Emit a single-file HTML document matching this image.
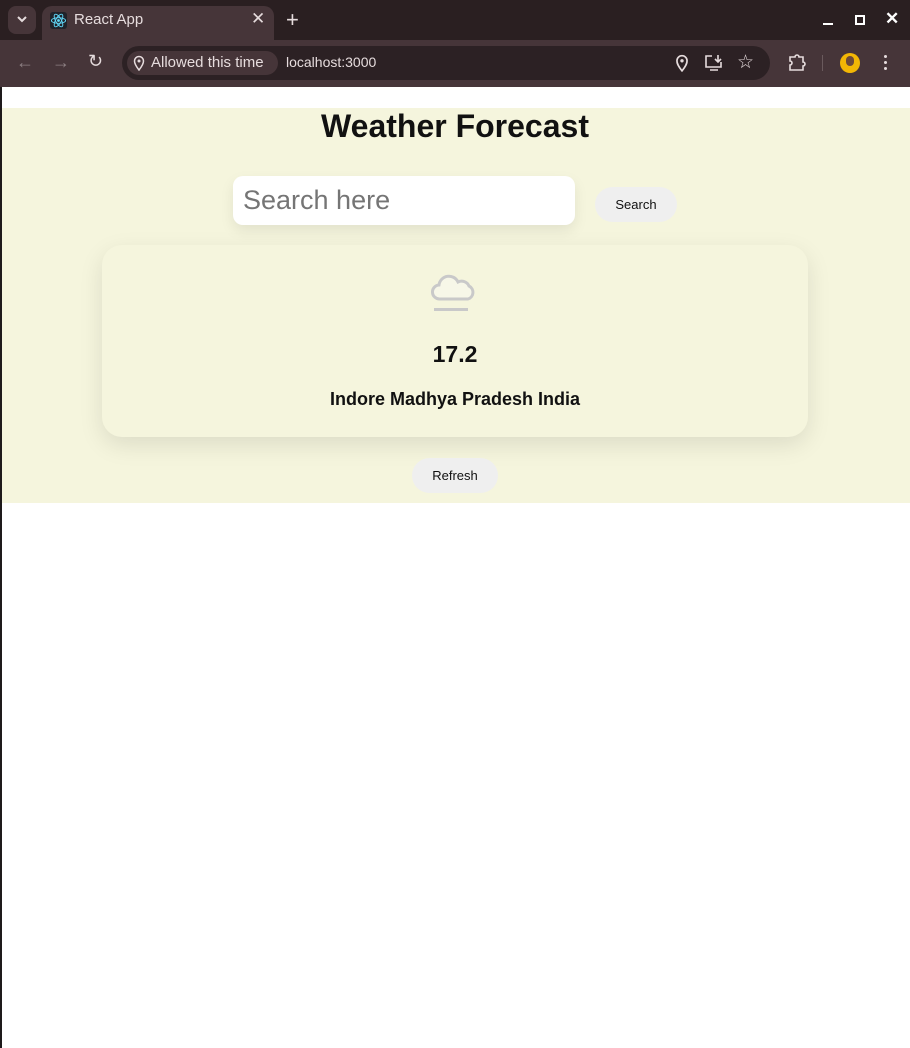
<!DOCTYPE html>
<html><head><meta charset="utf-8"><style>
*{box-sizing:border-box;margin:0;padding:0}
body{width:910px;height:1048px;overflow:hidden;background:#fff;font-family:"Liberation Sans",sans-serif;position:relative}
.top{position:absolute;left:0;top:0;width:910px;height:40px;background:#2a1f21}
.tb{position:absolute;left:0;top:40px;width:910px;height:47px;background:#463539}
.tab{position:absolute;left:42px;top:6px;width:232px;height:34px;background:#463539;border-radius:10px 10px 0 0}
.pg{position:absolute;left:0;top:87px;width:910px;height:961px;background:#fff;border-left:2px solid #1e1a1b}
.bei{position:absolute;left:2px;top:108px;width:908px;height:395px;background:#f5f5dd}
.t{color:#e6dcdd;font-size:15px;position:absolute}
</style></head><body>
<div class="top"></div>
<div style="position:absolute;left:8px;top:6px;width:28px;height:28px;border-radius:8px;background:#463539"></div>
<svg style="position:absolute;left:15px;top:14px" width="14" height="10"><path d="M3 3l4 4 4-4" stroke="#e6dcdd" stroke-width="2" fill="none"/></svg>
<div class="tab"></div>
<svg style="position:absolute;left:50px;top:12px" width="17" height="17" viewBox="0 0 24 24"><rect width="24" height="24" rx="4" fill="#20232a"/><g fill="none" stroke="#61dafb" stroke-width="1.3"><ellipse cx="12" cy="12" rx="10" ry="4"/><ellipse cx="12" cy="12" rx="10" ry="4" transform="rotate(60 12 12)"/><ellipse cx="12" cy="12" rx="10" ry="4" transform="rotate(120 12 12)"/></g><circle cx="12" cy="12" r="2" fill="#61dafb"/></svg>
<div class="t" style="left:74px;top:11px">React App</div>
<div class="t" style="left:251px;top:9px;font-size:17px">✕</div>
<div class="t" style="left:286px;top:7px;font-size:22px">+</div>
<div style="position:absolute;left:823px;top:23px;width:10px;height:2px;background:#fff"></div>
<div style="position:absolute;left:855px;top:15px;width:10px;height:10px;border:2px solid #fff"></div>
<div class="t" style="left:885px;top:9px;font-size:17px;color:#fff;font-weight:bold">✕</div>
<div class="tb"></div>
<div class="t" style="left:16px;top:52px;font-size:18px;color:#8d8083">←</div>
<div class="t" style="left:52px;top:52px;font-size:18px;color:#8d8083">→</div>
<div class="t" style="left:88px;top:51px;font-size:18px">↻</div>
<div style="position:absolute;left:122px;top:46px;width:648px;height:34px;border-radius:17px;background:#2c2124"></div>
<div style="position:absolute;left:127px;top:51px;width:151px;height:24px;border-radius:12px;background:#463539"></div>
<svg style="position:absolute;left:133px;top:55px" width="12" height="16" viewBox="0 0 12 16"><path d="M6 15C2 10 1.5 8 1.5 6a4.5 4.5 0 019 0c0 2-.5 4-4.5 9z" fill="none" stroke="#e6dcdd" stroke-width="1.5"/><circle cx="6" cy="6" r="1.5" fill="#e6dcdd"/></svg>
<div class="t" style="left:151px;top:54px">Allowed this time</div>
<div class="t" style="left:286px;top:54px;font-size:14px">localhost:3000</div>
<svg style="position:absolute;left:675px;top:54px" width="14" height="18" viewBox="0 0 12 16"><path d="M6 15C2 10 1.5 8 1.5 6a4.5 4.5 0 019 0c0 2-.5 4-4.5 9z" fill="none" stroke="#e6dcdd" stroke-width="1.5"/><circle cx="6" cy="6" r="1.5" fill="#e6dcdd"/></svg>
<svg style="position:absolute;left:704px;top:54px" width="20" height="18"><path d="M8 2H2v11h15V8M6 16h8M14 1v7m-3-3l3 3 3-3" fill="none" stroke="#e6dcdd" stroke-width="1.6"/></svg>
<div class="t" style="left:737px;top:51px;font-size:19px">☆</div>
<svg style="position:absolute;left:787px;top:53px" width="20" height="20"><path d="M3 4h5a2 2 0 014 0h4v5a2 2 0 010 4v4H3v-5a2 2 0 000-4z" fill="none" stroke="#e6dcdd" stroke-width="1.6"/></svg>
<div style="position:absolute;left:822px;top:55px;width:1px;height:16px;background:#6a5a5d"></div>
<div style="position:absolute;left:840px;top:53px;width:20px;height:20px;border-radius:50%;background:#f2b705"></div>
<div style="position:absolute;left:846px;top:56px;width:8px;height:10px;border-radius:4px;background:#6b4a3a"></div>
<div style="position:absolute;left:884px;top:55px;width:3px;height:3px;border-radius:50%;background:#e6dcdd;box-shadow:0 6px 0 #e6dcdd,0 12px 0 #e6dcdd"></div>
<div class="pg"></div>
<div class="bei"></div>
<div style="position:absolute;left:0;top:108px;width:910px;text-align:center;font-size:32px;font-weight:bold;color:#111">Weather Forecast</div>
<div style="position:absolute;left:233px;top:176px;width:342px;height:49px;border-radius:10px;background:#fff;box-shadow:0 6px 14px rgba(0,0,0,.08);font-size:27px;color:#757575;padding:9px 10px">Search here</div>
<div style="position:absolute;left:595px;top:187px;width:82px;height:35px;border-radius:18px;background:#efefef;font-size:13px;text-align:center;line-height:35px;color:#111">Search</div>
<div style="position:absolute;left:102px;top:245px;width:706px;height:192px;border-radius:20px;background:#f5f5dd;box-shadow:0 8px 24px rgba(0,0,0,.1)"></div>
<svg style="position:absolute;left:430px;top:270px" width="50" height="44" viewBox="0 0 50 44"><path d="M10 29a7 7 0 01-1-14 10 10 0 0119-3 8 8 0 0111 4 7 7 0 01-1 13z" fill="#f7f7e8" stroke="#c9c9c9" stroke-width="3"/><rect x="4" y="38" width="34" height="3" fill="#c9c9c9"/></svg>
<div style="position:absolute;left:0;top:341px;width:910px;text-align:center;font-size:23px;font-weight:bold;color:#111">17.2</div>
<div style="position:absolute;left:0;top:389px;width:910px;text-align:center;font-size:18px;font-weight:bold;color:#111">Indore Madhya Pradesh India</div>
<div style="position:absolute;left:412px;top:458px;width:86px;height:35px;border-radius:18px;background:#efefef;font-size:13px;text-align:center;line-height:35px;color:#111">Refresh</div>
</body></html>
